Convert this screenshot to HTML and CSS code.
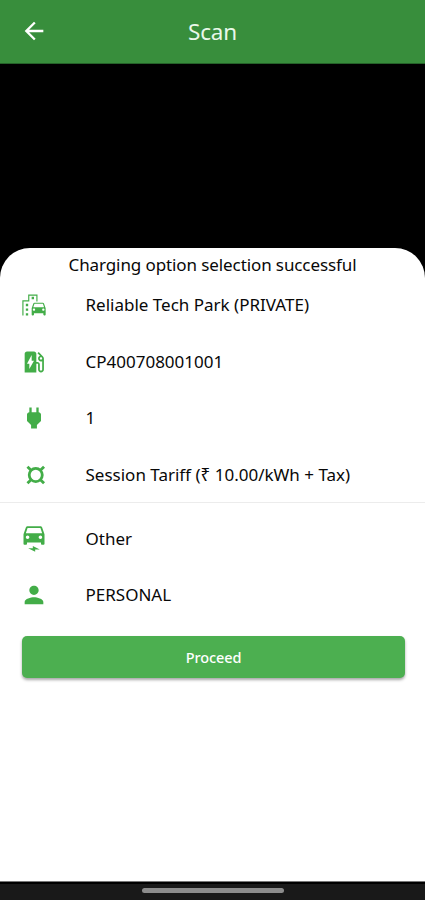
FILE: index.html
```html
<!DOCTYPE html>
<html lang="en">
<head>
<meta charset="utf-8">
<title>Scan</title>
<link rel="stylesheet" href="styles.css">
</head>
<body>
<div class="screen">
  <header class="appbar">
    <svg class="back" viewBox="0 0 24 24"><path d="M20 11H7.83l5.59-5.59L12 4l-8 8 8 8 1.41-1.41L7.83 13H20v-2z"/></svg>
    <h1 class="title">Scan</h1>
  </header>
  <main class="camera">
    <section class="sheet">
      <p class="message">Charging option selection successful</p>
      <ul class="list">
        <li class="row">
          <svg class="icon" viewBox="0 0 24 24"><path fill-rule="evenodd" d="M20.57 10.66C20.43 10.26 20.05 10 19.6 10h-7.19c-.46 0-.83.26-.98.66L10 14.77l.01 5.51c0 .38.31.72.69.72h.62c.38 0 .68-.38.68-.76V19h8v1.24c0 .38.31.76.69.76h.61c.38 0 .69-.34.69-.72l.01-1.37v-4.14l-1.43-4.11zm-8.16.34h7.19l1.03 3h-9.25l1.03-3zM12 17c-.55 0-1-.45-1-1s.45-1 1-1 1 .45 1 1-.45 1-1 1zm8 0c-.55 0-1-.45-1-1s.45-1 1-1 1 .45 1 1-.45 1-1 1z"/><path d="M14 9h1V3H7v5H2v13h1V9h5V4h6zM5 11h2v2H5zM10 5h2v2h-2zM5 15h2v2H5zM5 19h2v2H5z"/></svg>
          <span class="label">Reliable Tech Park (PRIVATE)</span>
        </li>
        <li class="row">
          <svg class="icon" viewBox="0 0 24 24"><path d="M19.77 7.23l.01-.01-3.72-3.72L15 4.56l2.11 2.11c-.94.36-1.61 1.26-1.61 2.33 0 1.38 1.12 2.5 2.5 2.5.36 0 .69-.08 1-.21v7.21c0 .55-.45 1-1 1s-1-.45-1-1V14c0-1.1-.9-2-2-2h-1V5c0-1.1-.9-2-2-2H6c-1.1 0-2 .9-2 2v16h10v-7.5h1.5v5c0 1.38 1.12 2.5 2.5 2.5s2.5-1.12 2.5-2.5V9c0-.69-.28-1.32-.73-1.77zM18 10c-.55 0-1-.45-1-1s.45-1 1-1 1 .45 1 1-.45 1-1 1zM8 18v-4.5H6L10 6v5h2l-4 7z"/></svg>
          <span class="label">CP400708001001</span>
        </li>
        <li class="row">
          <svg class="icon" viewBox="0 0 24 24"><path d="M16.01 7L16 3h-2v4h-4V3H8v4h-.01C7 6.99 6 7.99 6 8.99v5.49L9.5 18v3h5v-3l3.5-3.51v-5.5c0-1-1-2-1.99-1.99z"/></svg>
          <span class="label">1</span>
        </li>
        <li class="row">
          <svg class="icon icon-line" viewBox="0 0 24 24"><circle cx="13.5" cy="12" r="5.6"/><path d="M6.4 4.9l3.1 3.1M20.6 4.9L17.5 8M6.4 19.1L9.5 16M20.6 19.1L17.5 16"/></svg>
          <span class="label">Session Tariff (₹ 10.00/kWh + Tax)</span>
        </li>
      </ul>
      <ul class="list vehicle">
        <li class="row">
          <svg class="icon" viewBox="0 0 24 24"><path d="M18.92 2.01C18.72 1.42 18.16 1 17.5 1h-11c-.66 0-1.21.42-1.42 1.01L3 8v8c0 .55.45 1 1 1h1c.55 0 1-.45 1-1v-1h12v1c0 .55.45 1 1 1h1c.55 0 1-.45 1-1V8l-2.08-5.99zM6.5 12c-.83 0-1.5-.67-1.5-1.5S5.67 9 6.5 9 8 9.67 8 10.5 7.33 12 6.5 12zm11 0c-.83 0-1.5-.67-1.5-1.5s.67-1.5 1.5-1.5 1.5.67 1.5 1.5-.67 1.5-1.5 1.5zM5 7l1.5-4.5h11L19 7H5zM7 20h4v-2l6 3h-4v2z"/></svg>
          <span class="label">Other</span>
        </li>
        <li class="row">
          <svg class="icon" viewBox="0 0 24 24"><path d="M12 12c2.21 0 4-1.79 4-4s-1.79-4-4-4-4 1.79-4 4 1.79 4 4 4zm0 2c-2.67 0-8 1.34-8 4v2h16v-2c0-2.66-5.33-4-8-4z"/></svg>
          <span class="label">PERSONAL</span>
        </li>
      </ul>
      <button class="proceed" type="button">Proceed</button>
    </section>
  </main>
  <footer class="navbar"><span class="handle"></span></footer>
</div>
</body>
</html>
```
FILE: styles.css
```css
* { box-sizing: border-box; }
body {
  margin: 0;
  font-family: "Noto Sans", "Open Sans", sans-serif;
  color: #080808;
}
.screen {
  display: flex;
  flex-direction: column;
  width: 425px;
  height: 900px;
  overflow: hidden;
  background: #000;
}
.appbar {
  display: grid;
  grid-template-columns: 48px 1fr 48px;
  align-items: center;
  height: 64px;
  padding: 0 10px;
  background: #388e3c;
  border-bottom: 1px solid #256229;
}
.back {
  width: 28px;
  height: 28px;
  margin: -2px 0 0 9.5px;
  fill: #fff;
}
.title {
  margin: 0;
  padding-bottom: 1px;
  text-align: center;
  font-size: 22.5px;
  font-weight: 400;
  letter-spacing: -.2px;
  color: #e9f8e9;
}
.camera {
  flex: 1;
  display: flex;
  padding-top: 184px;
  background: #000;
}
.sheet {
  flex: 1;
  background: #fff;
  border-radius: 30px 30px 0 0;
}
.message {
  margin: 0;
  padding-top: 4px;
  height: 29px;
  line-height: 25px;
  text-align: center;
  font-size: 17px;
  letter-spacing: -.1px;
}
.list {
  margin: 0;
  padding: 0;
  list-style: none;
}
.list .row { height: 56.5px; }
.row {
  display: flex;
  align-items: center;
  padding-left: 19.5px;
}
.vehicle {
  margin-top: -1px;
  padding-top: 7.5px;
  border-top: 1px solid #ececec;
}
.icon {
  flex: none;
  width: 28px;
  height: 28px;
  margin-right: 38px;
  fill: #43ad48;
}
.icon-line {
  fill: none;
  stroke: #43ad48;
  stroke-width: 2.4;
}
.label {
  padding-bottom: 1px;
  font-size: 17px;
  white-space: nowrap;
}
.proceed {
  display: block;
  width: 383px;
  height: 42px;
  margin: 12.5px 0 0 22px;
  padding: 0;
  border: 0;
  border-radius: 5px;
  background: #4caf50;
  box-shadow: 0 2px 3px rgba(0, 0, 0, .35);
  font: 500 14.5px "Noto Sans", sans-serif;
  letter-spacing: -.1px;
  color: #fff;
}
.navbar {
  display: flex;
  justify-content: center;
  height: 18px;
  padding-top: 4px;
  background: #191919;
  border-top: 2px solid #000;
  box-shadow: 0 -1px 0 #777;
}
.handle {
  width: 142px;
  height: 5px;
  border-radius: 3px;
  background: #8c8c8c;
}
```
